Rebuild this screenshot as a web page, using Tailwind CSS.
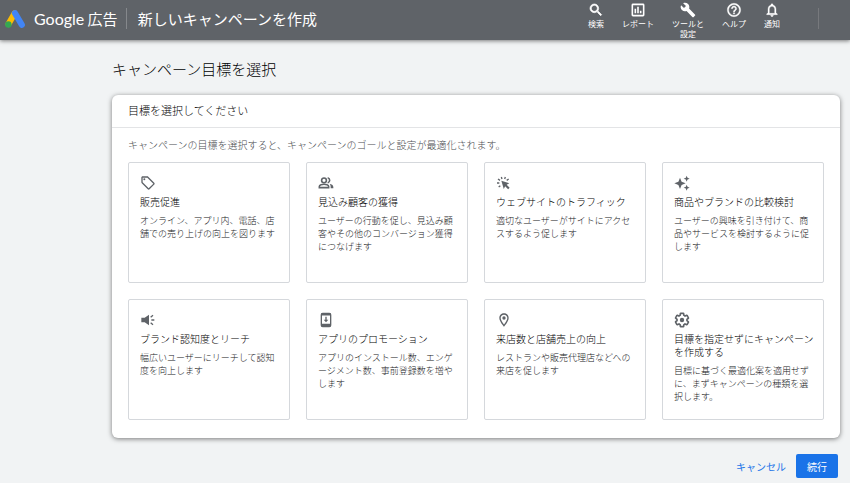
<!DOCTYPE html>
<html lang="ja">
<head>
    <meta charset="UTF-8">
    <meta name="viewport" content="width=device-width, initial-scale=1.0">
    <title>新しいキャンペーンを作成 - Google 広告</title>
    <script src="https://cdn.jsdelivr.net/npm/@tailwindcss/browser@4"></script>
</head>
<body class="min-h-screen bg-[#f1f3f4] font-['Noto_Sans_CJK_JP',sans-serif] text-[#202124]">
    <!-- ヘッダー -->
    <header class="flex h-10 items-center bg-[#5f6368] pb-[3px] pl-[5px] text-white shadow-[0_1px_4px_rgba(0,0,0,0.5)]">
        <a href="#" class="flex items-center">
            <svg class="h-[18px] w-5" viewBox="0 0 20 18">
                <path d="M9.5 3.5 3.5 14" stroke="#fbbc04" stroke-width="6" stroke-linecap="round"/>
                <path d="M10 3.2 16.8 14.8" stroke="#4285f4" stroke-width="6.2" stroke-linecap="round"/>
                <circle cx="3.4" cy="14.5" r="3.2" fill="#34a853"/>
            </svg>
            <span class="ml-[9px] text-[15px] leading-5"><span class="font-['Lato',sans-serif] text-base">Google</span> 広告</span>
        </a>
        <h1 class="ml-2 border-l border-[#85888c] pl-[11px] text-[15px] leading-[21px]">新しいキャンペーンを作成</h1>

        <nav class="ml-auto mr-[31px] flex h-full items-start gap-[18px] pt-0.5 text-center text-[8px] leading-[10px]">
            <a href="#" class="flex flex-col items-center gap-px">
                <svg class="size-4 fill-current" viewBox="0 0 24 24"><path stroke="currentColor" d="M15.5 14h-.79l-.28-.27C15.41 12.59 16 11.11 16 9.5 16 5.91 13.09 3 9.5 3S3 5.91 3 9.5 5.91 16 9.5 16c1.61 0 3.09-.59 4.23-1.57l.27.28v.79l5 4.99L20.49 19l-4.99-5zm-6 0C7.01 14 5 11.99 5 9.5S7.01 5 9.5 5 14 7.01 14 9.5 11.99 14 9.5 14z"/></svg>
                <span>検索</span>
            </a>
            <a href="#" class="flex flex-col items-center gap-px">
                <svg class="size-4" viewBox="0 0 24 24" fill="none" stroke="currentColor" stroke-width="2.4"><rect x="3.5" y="3.5" width="17" height="17" rx="1"/><path d="M8 17v-7M12 17V7M16 17v-4"/></svg>
                <span>レポート</span>
            </a>
            <a href="#" class="flex flex-col items-center gap-px">
                <svg class="size-4 fill-current" viewBox="0 0 24 24"><path d="M22.7 19l-9.1-9.1c.9-2.3.4-5-1.5-6.9-2-2-5-2.4-7.4-1.3L9 6 6 9 1.6 4.7C.4 7.1.9 10.1 2.9 12.1c1.9 1.9 4.6 2.4 6.9 1.5l9.1 9.1c.4.4 1 .4 1.4 0l2.3-2.3c.5-.4.5-1.1.1-1.4z"/></svg>
                <span>ツールと<br>設定</span>
            </a>
            <a href="#" class="flex flex-col items-center gap-px">
                <svg class="size-4 fill-current" viewBox="0 0 24 24"><path stroke="currentColor" stroke-width=".5" d="M11 18h2v-2h-2v2zm1-16C6.48 2 2 6.48 2 12s4.48 10 10 10 10-4.48 10-10S17.52 2 12 2zm0 18c-4.41 0-8-3.59-8-8s3.59-8 8-8 8 3.59 8 8-3.59 8-8 8zm0-14c-2.21 0-4 1.79-4 4h2c0-1.1.9-2 2-2s2 .9 2 2c0 2-3 1.75-3 5h2c0-2.25 3-2.5 3-5 0-2.21-1.79-4-4-4z"/></svg>
                <span>ヘルプ</span>
            </a>
            <a href="#" class="flex flex-col items-center gap-px">
                <svg class="size-4 fill-current" viewBox="0 0 24 24"><path stroke="currentColor" stroke-width=".5" d="M12 22c1.1 0 2-.9 2-2h-4c0 1.1.89 2 2 2zm6-6v-5c0-3.07-1.64-5.64-4.5-6.32V4c0-.83-.67-1.5-1.5-1.5s-1.5.67-1.5 1.5v.68C7.63 5.36 6 7.92 6 11v5l-2 2v1h16v-1l-2-2zm-2 1H8v-6c0-2.48 1.51-4.5 4-4.5s4 2.02 4 4.5v6z"/></svg>
                <span>通知</span>
            </a>
            <span class="ml-5 mt-1.5 h-[21px] w-px bg-[#77797d]"></span>
        </nav>
    </header>

    <main class="ml-28 mr-2.5">
        <h2 class="pt-[18px] text-[15px] font-light leading-[22px] text-black">キャンペーン目標を選択</h2>

        <!-- 目標の選択 -->
        <section class="mt-[15px] rounded-md bg-white font-light text-black shadow-[0_1px_5px_rgba(0,0,0,0.5)]">
            <h3 class="border-b border-[#e3e4e6] px-4 pb-0.5 text-[11px] leading-[30px]">目標を選択してください</h3>
            <p class="px-4 py-2 text-[10px] leading-[18px] text-[#4a4d51]">キャンペーンの目標を選択すると、キャンペーンのゴールと設定が最適化されます。</p>
            <div class="grid grid-cols-4 gap-4 px-4 pb-[18px]">
                <button type="button" class="flex min-h-[121px] flex-col items-start rounded-xs border border-[#d5d8dc] pb-2 pl-[11px] pr-[7px] pt-3 text-left">
                    <svg class="size-4 fill-[#5f6368]" viewBox="0 0 24 24"><path d="M21.41 11.58l-9-9C12.05 2.22 11.55 2 11 2H4c-1.1 0-2 .9-2 2v7c0 .55.22 1.05.59 1.42l9 9c.36.36.86.58 1.41.58s1.05-.22 1.41-.59l7-7c.37-.36.59-.86.59-1.41s-.23-1.06-.59-1.42zM13 20.01L4 11V4h7v-.01l9 9-7 7.02z"/><circle cx="6.5" cy="6.5" r="1.5"/></svg>
                    <span class="mt-1 text-[10px] leading-[13px]">販売促進</span>
                    <span class="mt-1.5 text-[9px] leading-[13px] text-[#202124]">オンライン、アプリ内、電話、店舗での売り上げの向上を図ります</span>
                </button>
                <button type="button" class="flex min-h-[121px] flex-col items-start rounded-xs border border-[#d5d8dc] pb-2 pl-[11px] pr-[7px] pt-3 text-left">
                    <svg class="size-4" viewBox="0 0 24 24" fill="none" stroke="#5f6368" stroke-width="2.4"><circle cx="9" cy="8" r="3.6"/><path d="M2 19v-1.6c0-2.4 4.6-3.6 7-3.6s7 1.2 7 3.6V19z"/><path d="M14.5 4.2a3.9 3.9 0 0 1 0 7.6"/><path d="M17.5 13.3c2.6.7 5.5 2.2 5.5 4.7v2h-4v-2.5c0-1.6-.7-2.9-1.5-4.2z" fill="#5f6368" stroke="none"/></svg>
                    <span class="mt-1 text-[10px] leading-[13px]">見込み顧客の獲得</span>
                    <span class="mt-1.5 text-[9px] leading-[13px] text-[#202124]">ユーザーの行動を促し、見込み顧客やその他のコンバージョン獲得につなげます</span>
                </button>
                <button type="button" class="flex min-h-[121px] flex-col items-start rounded-xs border border-[#d5d8dc] pb-2 pl-[11px] pr-[7px] pt-3 text-left">
                    <svg class="size-4" viewBox="0 0 24 24" fill="none" stroke="#5f6368" stroke-width="2"><path d="M8 3l1 3M14 3l-1 3M3 6l3 2M1.500 12h3.500M4 18l2.500-2M19 6l-3 2"/><path d="M8 8.500l12 4-4 2.200 4.500 4.500-2.300 2.300-4.500-4.500-2 4z" fill="#5f6368" stroke="none"/></svg>
                    <span class="mt-1 text-[10px] leading-[13px]">ウェブサイトのトラフィック</span>
                    <span class="mt-1.5 text-[9px] leading-[13px] text-[#202124]">適切なユーザーがサイトにアクセスするよう促します</span>
                </button>
                <button type="button" class="flex min-h-[121px] flex-col items-start rounded-xs border border-[#d5d8dc] pb-2 pl-[11px] pr-[7px] pt-3 text-left">
                    <svg class="size-4 fill-[#5f6368]" viewBox="0 0 24 24"><path d="M9 4l2.4 6.1 6.1 2.4-6.1 2.4L9 21l-2.4-6.1L.5 12.500l6.1-2.400zM19 1l1.300 3.200 3.200 1.300-3.200 1.300L19 10l-1.300-3.200-3.200-1.300 3.200-1.300zM19 14.500l1.300 3.200 3.200 1.300-3.200 1.300L19 23.500l-1.300-3.200-3.200-1.300 3.200-1.300z"/></svg>
                    <span class="mt-1 text-[10px] leading-[13px]">商品やブランドの比較検討</span>
                    <span class="mt-1.5 text-[9px] leading-[13px] text-[#202124]">ユーザーの興味を引き付けて、商品やサービスを検討するように促します</span>
                </button>
                <button type="button" class="flex min-h-[121px] flex-col items-start rounded-xs border border-[#d5d8dc] pb-2 pl-[11px] pr-[7px] pt-3 text-left">
                    <svg class="size-4" viewBox="0 0 24 24" fill="none" stroke="#5f6368" stroke-width="2"><path d="M2 8.500h5l6.500-4.500v16L7 15.500H2z" fill="#5f6368" stroke="none"/><path d="M16 8l3.500-3M17 12h4.500M16 16l3.500 3"/></svg>
                    <span class="mt-1 text-[10px] leading-[13px]">ブランド認知度とリーチ</span>
                    <span class="mt-1.5 text-[9px] leading-[13px] text-[#202124]">幅広いユーザーにリーチして認知度を向上します</span>
                </button>
                <button type="button" class="flex min-h-[121px] flex-col items-start rounded-xs border border-[#d5d8dc] pb-2 pl-[11px] pr-[7px] pt-3 text-left">
                    <svg class="size-4" viewBox="0 0 24 24" fill="none" stroke="#5f6368" stroke-width="2"><rect x="5" y="2" width="14" height="20" rx="2"/><path d="M5 3.500h14M5 19.500h14" stroke-width="3.500"/><path d="M12 7v6"/><path d="M8.500 11.500h7L12 15.500z" fill="#5f6368" stroke="none"/></svg>
                    <span class="mt-1 text-[10px] leading-[13px]">アプリのプロモーション</span>
                    <span class="mt-1.5 text-[9px] leading-[13px] text-[#202124]">アプリのインストール数、エンゲージメント数、事前登録数を増やします</span>
                </button>
                <button type="button" class="flex min-h-[121px] flex-col items-start rounded-xs border border-[#d5d8dc] pb-2 pl-[11px] pr-[7px] pt-3 text-left">
                    <svg class="size-4 fill-[#5f6368]" viewBox="0 0 24 24"><path d="M12 2C8.13 2 5 5.13 5 9c0 5.25 7 13 7 13s7-7.75 7-13c0-3.87-3.13-7-7-7zM7 9c0-2.76 2.24-5 5-5s5 2.24 5 5c0 2.88-2.88 7.19-5 9.88C9.92 16.21 7 11.85 7 9z"/><circle cx="12" cy="9" r="2.5"/></svg>
                    <span class="mt-1 text-[10px] leading-[13px]">来店数と店舗売上の向上</span>
                    <span class="mt-1.5 text-[9px] leading-[13px] text-[#202124]">レストランや販売代理店などへの来店を促します</span>
                </button>
                <button type="button" class="flex min-h-[121px] flex-col items-start rounded-xs border border-[#d5d8dc] pb-2 pl-[11px] pr-[7px] pt-3 text-left">
                    <svg class="size-4" viewBox="0 0 24 24" fill="none" stroke="#5f6368" stroke-width="2.4"><path d="M19.43 12.98c.04-.32.07-.64.07-.98s-.03-.66-.07-.98l2.11-1.65c.19-.15.24-.42.12-.64l-2-3.46c-.12-.22-.39-.3-.61-.22l-2.49 1c-.52-.4-1.08-.73-1.69-.98l-.38-2.65C14.46 2.18 14.25 2 14 2h-4c-.25 0-.46.18-.49.42l-.38 2.65c-.61.25-1.17.59-1.69.98l-2.49-1c-.23-.09-.49 0-.61.22l-2 3.46c-.13.22-.07.49.12.64l2.11 1.65c-.04.32-.07.65-.07.98s.03.66.07.98l-2.11 1.65c-.19.15-.24.42-.12.64l2 3.46c.12.22.39.3.61.22l2.49-1c.52.4 1.08.73 1.69.98l.38 2.65c.03.24.24.42.49.42h4c.25 0 .46-.18.49-.42l.38-2.65c.61-.25 1.17-.59 1.69-.98l2.49 1c.23.09.49 0 .61-.22l2-3.46c.12-.22.07-.49-.12-.64z"/><circle cx="12" cy="12" r="3.3" fill="#5f6368" stroke="none"/></svg>
                    <span class="mt-1 text-[10px] leading-[13px]">目標を指定せずにキャンペーンを作成する</span>
                    <span class="mt-1.5 text-[9px] leading-[13px] text-[#202124]">目標に基づく最適化案を適用せずに、まずキャンペーンの種類を選択します。</span>
                </button>
            </div>
        </section>

        <div class="flex items-center justify-end gap-2.5 pb-1 pr-0.5 pt-4 text-[10px]">
            <button type="button" class="h-6 text-[#1a73e8]">キャンセル</button>
            <button type="button" class="h-6 rounded-xs bg-[#1a73e8] px-[11px] text-white">続行</button>
        </div>
    </main>
</body>
</html>
